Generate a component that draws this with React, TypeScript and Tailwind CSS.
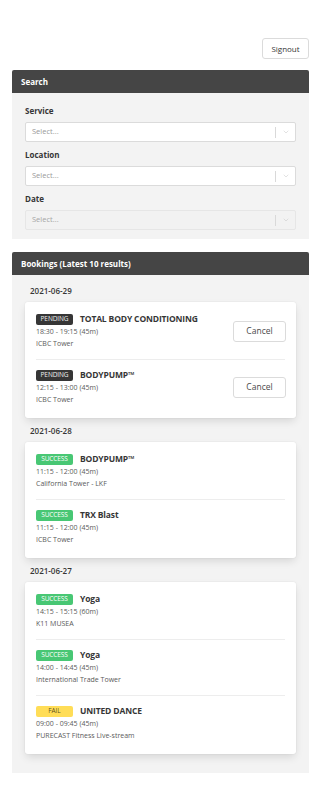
import { ChevronDown } from "lucide-react";

type Booking = {
  status: "PENDING" | "SUCCESS" | "FAIL";
  name: string;
  time: string;
  location: string;
  cancel?: boolean;
};

const groups: { date: string; items: Booking[] }[] = [
  {
    date: "2021-06-29",
    items: [
      { status: "PENDING", name: "TOTAL BODY CONDITIONING", time: "18:30 - 19:15 (45m)", location: "ICBC Tower", cancel: true },
      { status: "PENDING", name: "BODYPUMP™", time: "12:15 - 13:00 (45m)", location: "ICBC Tower", cancel: true },
    ],
  },
  {
    date: "2021-06-28",
    items: [
      { status: "SUCCESS", name: "BODYPUMP™", time: "11:15 - 12:00 (45m)", location: "California Tower - LKF" },
      { status: "SUCCESS", name: "TRX Blast", time: "11:15 - 12:00 (45m)", location: "ICBC Tower" },
    ],
  },
  {
    date: "2021-06-27",
    items: [
      { status: "SUCCESS", name: "Yoga", time: "14:15 - 15:15 (60m)", location: "K11 MUSEA" },
      { status: "SUCCESS", name: "Yoga", time: "14:00 - 14:45 (45m)", location: "International Trade Tower" },
      { status: "FAIL", name: "UNITED DANCE", time: "09:00 - 09:45 (45m)", location: "PURECAST Fitness Live-stream" },
    ],
  },
];

const badgeStyle = {
  PENDING: "bg-[#363636] text-[#f0f0f0]",
  SUCCESS: "bg-[#48c774] text-white",
  FAIL: "bg-[#ffdd57] text-[rgba(0,0,0,0.7)]",
};

function Select({ label, disabled }: { label: string; disabled?: boolean }) {
  return (
    <div className="mb-[7px]">
      <div className="h-[12px] mb-[5px] text-[8px] leading-[12px] font-bold text-[#363636]">{label}</div>
      <div
        className={`h-[20px] flex items-center rounded-[2px] border ${
          disabled ? "bg-[#f2f2f2] border-[#e6e6e6]" : "bg-white border-[#dbdbdb]"
        }`}
      >
        <span className={`flex-1 pl-[6px] text-[7.5px] ${disabled ? "text-[#a6a6a6]" : "text-[#9a9a9a]"}`}>
          Select...
        </span>
        <span className="w-px h-[11px] bg-[#d9d9d9]" />
        <span className="w-[19px] flex justify-center text-[#c4c4c4]">
          <ChevronDown size={8} strokeWidth={1.5} />
        </span>
      </div>
    </div>
  );
}

function Item({ b, first }: { b: Booking; first: boolean }) {
  return (
    <div className={`py-[9px] flex items-center ${first ? "" : "border-t border-[#ededed]"}`}>
      <div className="flex-1">
        <div className="h-[12px] flex items-center">
          <span
            className={`w-[37px] h-[11px] rounded-[2px] flex items-center justify-center text-[6.5px] tracking-[-0.1px] ${badgeStyle[b.status]}`}
          >
            {b.status}
          </span>
          <span className="ml-[7px] text-[8.5px] tracking-[-0.15px] font-bold text-[#363636]">{b.name}</span>
        </div>
        <div className="h-[13px] leading-[13px] text-[7px] text-[#5a5a5a]">{b.time}</div>
        <div className="h-[12px] leading-[12px] text-[7px] text-[#5a5a5a]">{b.location}</div>
      </div>
      {b.cancel && (
        <button className="w-[53px] h-[21px] mr-[-1px] rounded-[3px] border border-[#dbdbdb] bg-white text-[8.5px] text-[#4a4a4a]">
          Cancel
        </button>
      )}
    </div>
  );
}

export default function App() {
  return (
    <div className="min-h-[800px] bg-white pt-[38px] pl-[12px] pr-[13px] pb-[26px]" style={{ fontFamily: '"Open Sans", "Noto Sans", sans-serif' }}>
      <div className="flex justify-end mb-[11px]">
        <button className="w-[47px] h-[21px] rounded-[3px] border border-[#dbdbdb] bg-white text-[8px] text-[#363636]">
          Signout
        </button>
      </div>

      {/* Search */}
      <div className="bg-[#f3f3f3] rounded-t-[2px] mb-[13px]">
        <div className="h-[23px] bg-[#454545] rounded-t-[2px] pl-[9px] flex items-center text-[8px] font-bold text-white">
          Search
        </div>
        <div className="px-[13px] pt-[12px] pb-[2px]">
          <Select label="Service" />
          <Select label="Location" />
          <Select label="Date" disabled />
        </div>
      </div>

      {/* Bookings */}
      <div className="bg-[#f3f3f3] rounded-t-[2px]">
        <div className="h-[23px] bg-[#454545] rounded-t-[2px] pl-[9px] flex items-center text-[8px] font-bold text-white">
          Bookings (Latest 10 results)
        </div>
        <div className="px-[13px] pt-[9px] pb-[19px]">
          {groups.map((g, gi) => (
            <div key={g.date} className={gi ? "mt-[6px]" : ""}>
              <div className="h-[14px] leading-[14px] mb-[4px] pl-[5px] text-[8px] font-semibold text-[#363636]">
                {g.date}
              </div>
              <div className="bg-white rounded-[3px] px-[11px] pt-[2px] pb-[3px] shadow-[0_4px_8px_-1px_rgba(10,10,10,0.12),0_0_0_1px_rgba(10,10,10,0.02)]">
                {g.items.map((b, i) => (
                  <Item key={i} b={b} first={i === 0} />
                ))}
              </div>
            </div>
          ))}
        </div>
      </div>
    </div>
  );
}
